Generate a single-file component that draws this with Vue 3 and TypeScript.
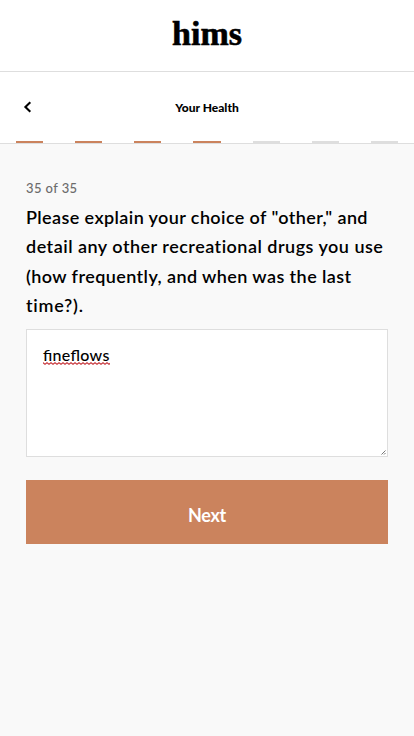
<script setup lang="ts">
const steps: boolean[] = [true, true, true, true, false, false, false]
const question: string[] = [
  'Please explain your choice of "other," and',
  'detail any other recreational drugs you use',
  '(how frequently, and when was the last',
  'time?).',
]
</script>

<template>
  <div class="page">
    <header class="brand"><span class="logo">hims</span></header>
    <nav class="bar">
      <div class="bar-row">
        <svg class="back" width="10" height="14" viewBox="0 0 10 14">
          <path d="M8.3 1.2 3.4 6l4.9 4.8" fill="none" stroke="#000" stroke-width="2.1" />
        </svg>
        <span class="title">Your Health</span>
      </div>
      <div class="steps">
        <i v-for="(done, i) in steps" :key="i" class="step" :class="{ done }"></i>
      </div>
    </nav>
    <main class="content">
      <div class="count">35 of 35</div>
      <h1 class="question">
        <span v-for="(line, i) in question" :key="i" class="line" :class="'line-' + i">{{ line }}</span>
      </h1>
      <div class="answer">
        <span class="value">fineflows</span>
        <svg class="squiggle" width="67" height="3" viewBox="0 0 67 3">
          <defs>
            <pattern id="wave" width="4" height="3" patternUnits="userSpaceOnUse">
              <path d="M-1 1.5 0 .7l2 1.6 2-1.6 1 .8" fill="none" stroke="#c8383e" stroke-width="1.1" />
            </pattern>
          </defs>
          <rect width="67" height="3" fill="url(#wave)" />
        </svg>
        <svg class="grip" width="5" height="5" viewBox="0 0 5 5">
          <path d="M.5 4.5l4-4M3 4.5 4.5 3" stroke="#777" stroke-width="1" fill="none" />
        </svg>
      </div>
      <button class="next" type="button">Next</button>
    </main>
  </div>
</template>

<style>
body {
  margin: 0;
  background: #f9f9f9;
}
</style>

<style scoped>
.page {
  min-height: 736px;
  background: #f9f9f9;
  color: #000;
  font-family: Lato, "Liberation Sans", sans-serif;
}
.brand {
  box-sizing: border-box;
  height: 72px;
  display: flex;
  justify-content: center;
  background: #fff;
  border-bottom: 1px solid #dedede;
}
.logo {
  font-family: "Liberation Serif", serif;
  font-weight: 700;
  font-size: 34px;
  line-height: 40px;
  padding-top: 14px;
  -webkit-text-stroke: 0.6px #000;
}
.bar {
  box-sizing: border-box;
  height: 72px;
  display: flex;
  flex-direction: column;
  background: #fff;
  border-bottom: 1px solid #dedede;
}
.bar-row {
  flex: 1;
  display: grid;
  grid-template-columns: 22px 1fr 22px;
  align-items: center;
  padding: 2px 22px 0;
}
.back {
  display: block;
}
.title {
  text-align: center;
  font-size: 12px;
  font-weight: 900;
}
.steps {
  display: flex;
  gap: 32px;
  padding: 0 16px;
}
.step {
  flex: 1;
  height: 2px;
  background: #dedede;
}
.step.done {
  background: #cb835d;
}
.content {
  padding: 33px 26px 0;
}
.count {
  height: 22px;
  line-height: 22px;
  font-size: 13px;
  font-weight: 500;
  color: #6c6c6c;
  letter-spacing: 0.4px;
}
.question {
  margin: 4px 0 9px;
  font-size: 18px;
  font-weight: 600;
  line-height: 29.3px;
}
.line {
  display: block;
  white-space: nowrap;
  letter-spacing: 0.4px;
}
.line-1 {
  letter-spacing: 0.49px;
}
.line-2 {
  letter-spacing: 0.42px;
}
.line-3 {
  letter-spacing: 0.75px;
}
.answer {
  position: relative;
  box-sizing: border-box;
  height: 128px;
  padding: 14px 16px;
  background: #fff;
  border: 1px solid #dedede;
}
.value {
  display: block;
  font-size: 16px;
  font-weight: 500;
  line-height: 22px;
  letter-spacing: 0.3px;
  font-feature-settings: "liga" 1;
}
.squiggle {
  position: absolute;
  left: 16px;
  top: 32px;
}
.grip {
  position: absolute;
  right: 1px;
  bottom: 1px;
}
.next {
  display: block;
  width: 100%;
  height: 64px;
  margin-top: 23px;
  padding: 5px 0 0;
  border: 0;
  background: #cb835d;
  color: #fff;
  font: 700 18px/24px Lato, "Liberation Sans", sans-serif;
  letter-spacing: -0.3px;
}
</style>
